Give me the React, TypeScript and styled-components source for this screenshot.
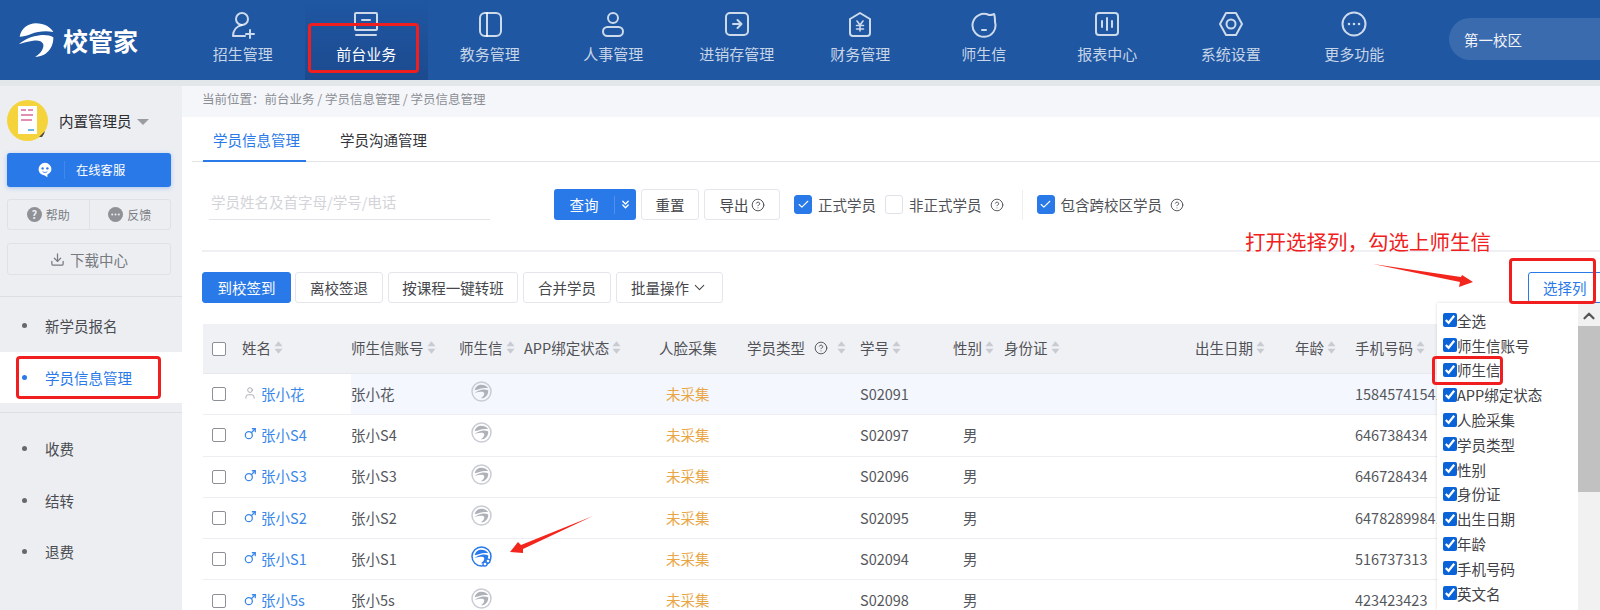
import React from 'react';
import styled, { createGlobalStyle } from 'styled-components';
import { Check, ChevronDown, ChevronsDown, ChevronUp, CircleHelp, Download, Mars, User } from 'lucide-react';

const GlobalStyle = createGlobalStyle`
	html, body {
		margin: 0;
		padding: 0;
		background: #fff;
	}
	body {
		font-family: "Noto Sans CJK SC", "Liberation Sans", sans-serif;
		color: #5c5f66;
	}
	* {
		box-sizing: border-box;
	}
`;

const navStroke = {
	fill: 'none',
	stroke: 'currentColor',
	strokeWidth: 2,
	strokeLinecap: 'round' as const,
	strokeLinejoin: 'round' as const,
};

const navItems = [
	{
		label: '招生管理',
		icon: (
			<>
				<circle cx="12" cy="8" r="6" />
				<path d="M12 14c-5 1-9 5-9 11h12" />
				<path d="M20 19v8M16 23h8" />
			</>
		),
	},
	{
		label: '前台业务',
		active: true,
		icon: (
			<>
				<rect x="2" y="2" width="22" height="17" rx="1" />
				<path d="M9 9h8M3 24h20" />
			</>
		),
	},
	{
		label: '教务管理',
		icon: (
			<>
				<rect x="3" y="2" width="21" height="23" rx="5" />
				<path d="M10 2v23" />
			</>
		),
	},
	{
		label: '人事管理',
		icon: (
			<>
				<circle cx="13" cy="7" r="5" />
				<rect x="3" y="16" width="20" height="9" rx="4.5" />
			</>
		),
	},
	{
		label: '进销存管理',
		icon: (
			<>
				<rect x="2" y="2" width="22" height="22" rx="4" />
				<path d="M9 13h8M13.5 9l4 4-4 4" />
			</>
		),
	},
	{
		label: '财务管理',
		icon: (
			<>
				<path d="M13 2l10 6v14a3 3 0 0 1-3 3H6a3 3 0 0 1-3-3V8z" />
				<path d="M10 10l3 4 3-4M9.5 14.5h7M9.5 18h7M13 14v6" strokeWidth="1.6" />
			</>
		),
	},
	{
		label: '师生信',
		icon: (
			<>
				<path d="M18 4a11.5 11.5 0 1 0 6 7c0-3 0-6-1-8-1 1-3 1-5 1z" />
				<path d="M11 19h4" />
			</>
		),
	},
	{
		label: '报表中心',
		icon: (
			<>
				<rect x="2" y="2" width="22" height="22" rx="3" />
				<path d="M8 10v6M13 7v12M18 10v6" />
			</>
		),
	},
	{
		label: '系统设置',
		icon: (
			<>
				<path d="M8 2h10l6 11-6 11H8L2 13z" />
				<circle cx="13" cy="13" r="4.5" />
			</>
		),
	},
	{
		label: '更多功能',
		icon: (
			<>
				<circle cx="13" cy="13" r="11.5" />
				<path d="M8 13h.01M13 13h.01M18 13h.01" strokeWidth="2.6" />
			</>
		),
	},
];

const columns = [
	{ title: '姓名', sort: true },
	{ title: '师生信账号', sort: true },
	{ title: '师生信', sort: true },
	{ title: 'APP绑定状态', sort: true },
	{ title: '人脸采集' },
	{ title: '学员类型', help: true, sort: true },
	{ title: '学号', sort: true },
	{ title: '性别', sort: true },
	{ title: '身份证', sort: true },
	{ title: '出生日期', sort: true },
	{ title: '年龄', sort: true },
	{ title: '手机号码', sort: true },
];

const students = [
	{ name: '张小花', no: 'S02091', gender: '', phone: '15845741541', hover: true },
	{ name: '张小S4', no: 'S02097', gender: '男', phone: '646738434' },
	{ name: '张小S3', no: 'S02096', gender: '男', phone: '646728434' },
	{ name: '张小S2', no: 'S02095', gender: '男', phone: '64782899841' },
	{ name: '张小S1', no: 'S02094', gender: '男', phone: '516737313', bound: true },
	{ name: '张小5s', no: 'S02098', gender: '男', phone: '423423423' },
];

const pickList = ['全选', '师生信账号', '师生信', 'APP绑定状态', '人脸采集', '学员类型', '性别', '身份证', '出生日期', '年龄', '手机号码', '英文名'];

const SwooshPaths = () => (
	<>
		<path d="M2 40C6 15 28 0 50 0c25 0 45 12 52 26-22-4-47-2-66 6-14 5-24 8-34 8z" />
		<path d="M0 62c18-14 40-24 62-26 16-2 30 0 40 6 1 28-17 58-54 58 17-10 27-25 24-38-4-10-17-12-30-10-17 3-30 6-42 10z" />
	</>
);

const AppIcon = ({ bound }: { bound?: boolean }) => {
	const color = bound ? '#2979e8' : '#c9ccd3';
	return (
		<AppIconSvg viewBox="0 0 42 42">
			<circle cx="21" cy="21" r="19" fill="none" stroke={color} strokeWidth="3" />
			<g fill={bound ? color : '#aeb1b8'} transform="translate(7 7.500) scale(.27)">
				<SwooshPaths />
			</g>
			{bound && (
				<g fill="#fff" stroke={color} strokeWidth="2.500">
					<circle cx="34" cy="30" r="4" />
					<circle cx="28" cy="36" r="4" />
				</g>
			)}
		</AppIconSvg>
	);
};

const SortCaret = () => (
	<SortSvg viewBox="0 0 10 14">
		<path d="M5 0l4.500 5.500h-9zM5 14L.5 8.500h9z" />
	</SortSvg>
);

const App = () => {
	return (
		<Page>
			<GlobalStyle />
			<Header>
				<Logo>
					<LogoMark viewBox="0 0 104 100" fill="#fff">
						<SwooshPaths />
					</LogoMark>
					<LogoText>校管家</LogoText>
				</Logo>
				<Nav>
					{navItems.map((item) => (
						<NavItem key={item.label} $active={item.active}>
							<NavIcon viewBox="0 0 26 28" {...navStroke}>
								{item.icon}
							</NavIcon>
							<span>{item.label}</span>
						</NavItem>
					))}
				</Nav>
				<Campus>第一校区</Campus>
			</Header>
			<Body>
				<Sidebar>
					<UserRow>
						<Avatar viewBox="0 0 41 41">
							<circle cx="20.500" cy="20.500" r="20.500" fill="#f5d33c" />
							<path d="M32 37l6-6-1 3-2 3z" fill="#4c4a3a" />
							<rect x="11" y="6" width="19" height="28" fill="#fff" />
							<path d="M14 10h5M21 10h5M14 15h12M14 20h11" stroke="#d9689c" strokeWidth="1.500" />
							<path d="M21 30h6" stroke="#3aa0d8" strokeWidth="1.500" />
						</Avatar>
						<UserName>内置管理员</UserName>
						<UserCaret />
					</UserRow>
					<ServiceButton>
						<ServiceIcon viewBox="0 0 20 20">
							<path d="M10 1a8 8 0 0 0-8 8c0 4 3 7 7 7.500l4 2.500v-3.500c3-1.500 5-3.500 5-6.500a8 8 0 0 0-8-8z" fill="#fff" />
							<circle cx="7" cy="8" r="1.500" fill="#2979e8" />
							<circle cx="13" cy="8" r="1.500" fill="#2979e8" />
							<path d="M7 12c2 1.500 4 1.500 6 0" stroke="#2979e8" fill="none" />
						</ServiceIcon>
						<ServiceLabel>在线客服</ServiceLabel>
					</ServiceButton>
					<HelpRow>
						<HelpCell>
							<RoundBadge>?</RoundBadge>帮助
						</HelpCell>
						<HelpCell>
							<FeedbackIcon viewBox="0 0 15 15">
								<circle cx="7.500" cy="7.500" r="7.500" fill="#8f9197" />
								<circle cx="4.200" cy="7.500" r="1" fill="#eceef2" />
								<circle cx="7.500" cy="7.500" r="1" fill="#eceef2" />
								<circle cx="10.800" cy="7.500" r="1" fill="#eceef2" />
							</FeedbackIcon>
							反馈
						</HelpCell>
					</HelpRow>
					<DownloadButton>
						<Download size={15} strokeWidth={2} />
						下载中心
					</DownloadButton>
					<SideDivider $top={21} />
					<SideItem>新学员报名</SideItem>
					<SideItem $active>学员信息管理</SideItem>
					<SideDivider $top={9} $bottom={10} />
					<SideItem>收费</SideItem>
					<SideItem>结转</SideItem>
					<SideItem>退费</SideItem>
				</Sidebar>
				<Main>
					<Breadcrumb>{'当前位置\uFF1A前台业务 / 学员信息管理 / 学员信息管理'}</Breadcrumb>
					<Tabs>
						<Tab $active>学员信息管理</Tab>
						<Tab>学员沟通管理</Tab>
					</Tabs>
					<Content>
						<FilterRow>
							<SearchInput placeholder="学员姓名及首字母/学号/电话" />
							<QueryButton>
								<QueryLabel>查询</QueryLabel>
								<ChevronsDown size={13} strokeWidth={2.500} />
							</QueryButton>
							<PlainButton $width={58} $gap={5}>重置</PlainButton>
							<PlainButton $width={76} $gap={5}>
								导出
								<CircleHelp size={14} strokeWidth={1.600} />
							</PlainButton>
							<CheckBox $checked $gap={14}>
								<Check size={13} strokeWidth={2} color="#fff" />
							</CheckBox>
							<CheckLabel>正式学员</CheckLabel>
							<CheckBox $gap={9} />
							<CheckLabel>非正式学员</CheckLabel>
							<HelpMark size={14} strokeWidth={1.600} />
							<FilterDivider />
							<CheckBox $checked $gap={14}>
								<Check size={13} strokeWidth={2} color="#fff" />
							</CheckBox>
							<CheckLabel>包含跨校区学员</CheckLabel>
							<HelpMark size={14} strokeWidth={1.600} />
						</FilterRow>
						<ActionRow>
							<PlainButton $width={89} $primary>到校签到</PlainButton>
							<PlainButton $width={88} $gap={4}>离校签退</PlainButton>
							<PlainButton $width={130} $gap={5}>按课程一键转班</PlainButton>
							<PlainButton $width={88} $gap={5}>合并学员</PlainButton>
							<PlainButton $width={107} $gap={5}>
								批量操作
								<ChevronDown size={17} strokeWidth={1.500} />
							</PlainButton>
							<ColumnButton>选择列</ColumnButton>
						</ActionRow>
						<Table>
							<HeadRow>
								<Cell>
									<RowCheck />
								</Cell>
								{columns.map((col) => (
									<HeadCell key={col.title}>
										{col.title}
										{col.help && <TableHelp size={14} strokeWidth={1.600} />}
										{col.sort && <SortCaret />}
									</HeadCell>
								))}
							</HeadRow>
							{students.map((s) => (
								<BodyRow key={s.no} $hover={s.hover}>
									<Cell $plain>
										<RowCheck />
									</Cell>
									<NameCell $plain>
										{s.gender ? <Mars size={14} strokeWidth={2.200} color="#3a87ea" /> : <User size={14} strokeWidth={1.500} color="#a0a3aa" />}
										{s.name}
									</NameCell>
									<Cell>{s.name}</Cell>
									<Cell>
										<AppIcon bound={s.bound} />
									</Cell>
									<Cell />
									<Cell>
										<Pending>未采集</Pending>
									</Cell>
									<Cell />
									<Cell>{s.no}</Cell>
									<Cell>
										<Gender>{s.gender}</Gender>
									</Cell>
									<Cell />
									<Cell />
									<Cell />
									<Cell>{s.phone}</Cell>
								</BodyRow>
							))}
						</Table>
					</Content>
				</Main>
			</Body>

			<PickPanel>
				<PickList>
					{pickList.map((item) => (
						<PickItem key={item}>
							<PickCheck type="checkbox" defaultChecked />
							{item}
						</PickItem>
					))}
				</PickList>
				<PickScroll>
					<ChevronUp size={18} strokeWidth={3} color="#555" />
					<PickThumb />
				</PickScroll>
			</PickPanel>

			<RedBox $x={308} $y={23} $w={111} $h={50} />
			<RedBox $x={16} $y={356} $w={145} $h={43} />
			<RedBox $x={1509} $y={258} $w={87} $h={46} />
			<RedBox $x={1432} $y={356} $w={71} $h={29} />
			<Note>{'打开选择列\uFF0C勾选上师生信'}</Note>
			<Arrow $x={1373} $y={264} width="100" height="23" viewBox="1373 264 100 23">
				<polygon points="1373,264 1461,277 1462,275 1473,282 1459,287 1460,282" />
			</Arrow>
			<Arrow $x={510} $y={516} width="83" height="37" viewBox="510 516 83 37">
				<polygon points="593,516 521,545 518,542 510,552 523,553 523,549" />
			</Arrow>
		</Page>
	);
};

const Page = styled.div`
	position: relative;
	display: flex;
	flex-direction: column;
	width: 1600px;
	height: 610px;
	overflow: hidden;
`;

const Header = styled.header`
	display: flex;
	flex: none;
	height: 86px;
	background: #1f57a3;
	border-bottom: 6px solid #e3e7ea;
`;

const Logo = styled.div`
	display: flex;
	align-items: center;
	gap: 9px;
	width: 181px;
	padding-left: 19px;
`;

const LogoMark = styled.svg`
	width: 35px;
	height: 34px;
	flex: none;
`;

const LogoText = styled.span`
	font-size: 25px;
	font-weight: 700;
	color: #fff;
	letter-spacing: 0;
`;

const Nav = styled.nav`
	display: flex;
`;

const NavItem = styled.div<{ $active?: boolean }>`
	display: flex;
	flex-direction: column;
	align-items: center;
	width: 123.500px;
	padding-top: 11px;
	font-size: 15px;
	line-height: 22px;
	color: ${(p) => (p.$active ? '#fff' : 'rgba(255, 255, 255, 0.75)')};
	background: ${(p) => (p.$active ? 'linear-gradient(#1f57a3, #1c4a8e)' : 'transparent')};
`;

const NavIcon = styled.svg`
	width: 26px;
	height: 28px;
	margin-bottom: 4px;
	color: rgba(255, 255, 255, 0.78);
`;

const Campus = styled.div`
	display: flex;
	align-items: center;
	flex: 1;
	height: 42px;
	margin: 18px 0 0 33px;
	padding-left: 15px;
	border-radius: 21px 0 0 21px;
	background: rgba(255, 255, 255, 0.12);
	font-size: 14.500px;
	color: #f2f4f8;
`;

const Body = styled.div`
	display: flex;
	flex: 1;
	min-height: 0;
`;

const Sidebar = styled.aside`
	display: flex;
	flex-direction: column;
	flex: none;
	width: 182px;
	background: #eceef2;
`;

const UserRow = styled.div`
	display: flex;
	align-items: center;
	padding: 14px 0 0 7px;
`;

const Avatar = styled.svg`
	width: 41px;
	height: 41px;
`;

const UserName = styled.span`
	margin-left: 11px;
	font-size: 14.500px;
	color: #2b2d31;
`;

const UserCaret = styled.i`
	width: 0;
	height: 0;
	margin: 3px 0 0 5px;
	border-style: solid;
	border-width: 6px 6px 0;
	border-color: #9a9ca1 transparent transparent;
`;

const ServiceButton = styled.div`
	display: flex;
	align-items: center;
	height: 34px;
	margin: 12px 11px 0 7px;
	border-radius: 3px;
	background: #2979e8;
	box-shadow: 0 1px 4px rgba(41, 121, 232, 0.35);
`;

const ServiceIcon = styled.svg`
	width: 16px;
	height: 16px;
	margin-left: 30px;
`;

const ServiceLabel = styled.span`
	margin-left: 11px;
	padding-left: 11px;
	font-size: 12.300px;
	color: #fff;
	border-left: 1px solid #3f88ec;
	line-height: 18px;
`;

const HelpRow = styled.div`
	display: flex;
	height: 31px;
	margin: 12px 11px 0 7px;
	border: 1px solid #dfe1e6;
	border-radius: 3px;
`;

const HelpCell = styled.div`
	display: flex;
	align-items: center;
	justify-content: center;
	gap: 4px;
	flex: 1;
	font-size: 12px;
	color: #7b7e84;

	& + & {
		border-left: 1px solid #dfe1e6;
	}
`;

const RoundBadge = styled.span`
	display: flex;
	align-items: center;
	justify-content: center;
	width: 15px;
	height: 15px;
	border-radius: 50%;
	background: #8f9197;
	color: #eceef2;
	font-size: 11px;
	font-weight: 700;
	line-height: 1;
`;

const FeedbackIcon = styled.svg`
	flex: none;
	width: 15px;
	height: 15px;
`;

const DownloadButton = styled.div`
	display: flex;
	align-items: center;
	justify-content: center;
	gap: 5px;
	height: 32px;
	margin: 13px 11px 0 7px;
	border: 1px solid #dfe1e6;
	border-radius: 3px;
	font-size: 14.500px;
	color: #777a80;
`;

const SideDivider = styled.div<{ $top: number; $bottom?: number }>`
	flex: none;
	height: 1px;
	margin: ${(p) => p.$top}px 0 ${(p) => p.$bottom ?? 3}px 0;
	background: #dcdee3;
`;

const SideItem = styled.div<{ $active?: boolean }>`
	position: relative;
	flex: none;
	height: 51.500px;
	padding-left: 45px;
	font-size: 14.500px;
	line-height: 51.500px;
	color: ${(p) => (p.$active ? '#2979e8' : '#4a4c51')};
	background: ${(p) => (p.$active ? '#fff' : 'transparent')};

	&::before {
		content: '';
		position: absolute;
		left: 22px;
		top: 23px;
		width: 5px;
		height: 5px;
		border-radius: 50%;
		background: ${(p) => (p.$active ? '#2979e8' : '#66686d')};
	}
`;

const Main = styled.main`
	display: flex;
	flex-direction: column;
	flex: 1;
	min-width: 0;
	overflow: hidden;
`;

const Breadcrumb = styled.div`
	flex: none;
	height: 31px;
	padding-left: 20px;
	background: #f5f6fa;
	font-size: 12.500px;
	line-height: 26px;
	color: #8b8e94;
`;

const Tabs = styled.div`
	display: flex;
	flex: none;
	height: 45px;
	margin-left: 10px;
	padding-left: 11px;
	border-bottom: 1px solid #e2e4ea;
`;

const Tab = styled.div<{ $active?: boolean }>`
	width: 103px;
	margin-right: 24px;
	height: 45px;
	padding: 11px 0 0 4px;
	text-align: center;
	font-size: 14.500px;
	line-height: 24px;
	color: ${(p) => (p.$active ? '#2979e8' : '#33353a')};
	border-bottom: ${(p) => (p.$active ? '2px solid #2979e8' : 'none')};
`;

const Content = styled.div`
	display: flex;
	flex-direction: column;
	padding-left: 20px;
`;

const FilterRow = styled.div`
	display: flex;
	align-items: center;
	flex: none;
	height: 90px;
	padding: 27px 0 30px 7px;
	border-bottom: 2px solid #eff0f4;
	font-size: 14.500px;
`;

const SearchInput = styled.input`
	flex: none;
	width: 281px;
	height: 31px;
	margin-right: 64px;
	padding: 0 2px 6px;
	border: 0;
	border-bottom: 1px solid #e2e4ea;
	outline: none;
	background: transparent;
	font: 14.500px "Noto Sans CJK SC", sans-serif;

	&::placeholder {
		color: #d2d4d9;
	}
`;

const QueryButton = styled.div`
	display: flex;
	align-items: center;
	flex: none;
	width: 82px;
	height: 31px;
	border-radius: 3px;
	background: #2979e8;
	color: #fff;
	font-size: 14.500px;
`;

const QueryLabel = styled.span`
	width: 61px;
	margin-right: 4px;
	text-align: center;
	line-height: 18px;
	border-right: 1px solid #4f91ec;
`;

const PlainButton = styled.div<{ $width: number; $gap?: number; $primary?: boolean }>`
	display: flex;
	align-items: center;
	justify-content: center;
	gap: 2px;
	flex: none;
	width: ${(p) => p.$width}px;
	height: 31px;
	margin-left: ${(p) => p.$gap ?? 0}px;
	border: 1px solid ${(p) => (p.$primary ? '#2979e8' : '#e4e6eb')};
	border-radius: 3px;
	background: ${(p) => (p.$primary ? '#2979e8' : '#fff')};
	color: ${(p) => (p.$primary ? '#fff' : '#45474c')};
	font-size: 14.500px;
`;

const CheckBox = styled.div<{ $checked?: boolean; $gap: number }>`
	display: flex;
	align-items: center;
	justify-content: center;
	flex: none;
	width: 18px;
	height: 19px;
	margin-left: ${(p) => p.$gap}px;
	border: 1px solid ${(p) => (p.$checked ? '#2979e8' : '#dfe1e7')};
	border-radius: 3px;
	background: ${(p) => (p.$checked ? '#2979e8' : '#fff')};
`;

const CheckLabel = styled.span`
	flex: none;
	margin-left: 6px;
	color: #505257;
`;

const HelpMark = styled(CircleHelp)`
	flex: none;
	margin-left: 8px;
	color: #505257;
`;

const FilterDivider = styled.div`
	flex: none;
	width: 1px;
	height: 30px;
	margin-left: 18px;
	background: #eceef2;
`;

const ActionRow = styled.div`
	display: flex;
	flex: none;
	height: 31px;
	margin-top: 20px;
`;

const ColumnButton = styled.div`
	display: flex;
	align-items: center;
	flex: none;
	width: 80px;
	height: 31px;
	margin-left: auto;
	margin-right: -8px;
	padding-left: 14px;
	border: 1px solid #2979e8;
	border-radius: 3px;
	color: #2979e8;
	font-size: 14.500px;
`;

const Table = styled.div`
	display: flex;
	flex-direction: column;
	margin: 21px 0 0 1px;
	font-size: 14.500px;
`;

const gridColumns = '39px 109px 108px 65px 135px 88px 113px 93px 51px 191px 100px 60px 245px';

const HeadRow = styled.div`
	display: grid;
	grid-template-columns: ${gridColumns};
	height: 50px;
	background: #f0f1f5;
	border-bottom: 1px solid #e6e8ed;
	color: #505257;
`;

const BodyRow = styled.div<{ $hover?: boolean }>`
	display: grid;
	grid-template-columns: ${gridColumns};
	height: 41.300px;
	background: ${(p) => (p.$hover ? '#f4f8fe' : '#fff')};
	border-bottom: 1px solid #eceef2;
	color: #55575c;
`;

const Cell = styled.div<{ $plain?: boolean }>`
	display: flex;
	align-items: center;
	min-width: 0;
	padding-bottom: 2px;
	white-space: nowrap;
	background: ${(p) => (p.$plain ? '#fff' : 'transparent')};
`;

const HeadCell = styled(Cell)`
	gap: 3px;
`;

const NameCell = styled(Cell)`
	gap: 4px;
	padding-left: 1px;
	color: #3a87ea;
`;

const RowCheck = styled.i`
	display: block;
	width: 14px;
	height: 14px;
	margin: 2px 0 0 9px;
	border: 1.500px solid #8d8f99;
	border-radius: 2px;
	background: #fff;
`;

const TableHelp = styled(CircleHelp)`
	margin: 0 6px;
	color: #505257;
`;

const SortSvg = styled.svg`
	flex: none;
	width: 9px;
	height: 13px;
	fill: #c8ccd2;
`;

const AppIconSvg = styled.svg`
	width: 21px;
	height: 21px;
	margin: -3px 0 0 12px;
`;

const Pending = styled.span`
	margin-left: 7px;
	color: #e9a644;
`;

const Gender = styled.span`
	margin-left: 10px;
`;

const PickPanel = styled.div`
	position: absolute;
	left: 1437px;
	top: 303px;
	bottom: 0;
	right: 0;
	display: flex;
	background: #fff;
	box-shadow: 0 0 3px rgba(0, 0, 0, 0.15);
`;

const PickList = styled.div`
	flex: 1;
	padding-top: 5px;
`;

const PickItem = styled.label`
	display: flex;
	align-items: center;
	height: 24.800px;
	padding-left: 6px;
	font-size: 14.500px;
	color: #3f4146;
	white-space: nowrap;
`;

const PickCheck = styled.input`
	width: 14px;
	height: 14px;
	margin: 0;
	accent-color: #0b63d8;
`;

const PickScroll = styled.div`
	display: flex;
	flex-direction: column;
	align-items: center;
	flex: none;
	width: 22px;
	background: #f1f1f1;
	padding-top: 4px;
`;

const PickThumb = styled.div`
	align-self: stretch;
	height: 166px;
	margin-top: 1px;
	background: #c1c1c1;
`;

const RedBox = styled.div<{ $x: number; $y: number; $w: number; $h: number }>`
	position: absolute;
	left: ${(p) => p.$x}px;
	top: ${(p) => p.$y}px;
	width: ${(p) => p.$w}px;
	height: ${(p) => p.$h}px;
	border: 3px solid #f01e1e;
	border-radius: 4px;
`;

const Note = styled.div`
	position: absolute;
	left: 1245px;
	top: 227px;
	font-size: 20.500px;
	line-height: 28px;
	color: #f02020;
	white-space: nowrap;
`;

const Arrow = styled.svg<{ $x: number; $y: number }>`
	position: absolute;
	left: ${(p) => p.$x}px;
	top: ${(p) => p.$y}px;
	fill: #f3261d;
`;

export default App;
